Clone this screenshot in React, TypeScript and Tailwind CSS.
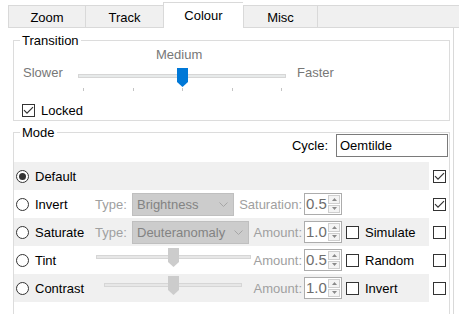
import React from "react";

function CheckBox({ checked }: { checked?: boolean }) {
  return (
    <div className="w-[13px] h-[13px] border border-[#333333] bg-white flex items-center justify-center shrink-0">
      {checked && (
        <svg width="11" height="9" viewBox="0 0 11 9">
          <path d="M1 4.2 L4 7.2 L10 1.2" fill="none" stroke="#333333" strokeWidth="1.2" />
        </svg>
      )}
    </div>
  );
}

function Radio({ checked }: { checked?: boolean }) {
  return (
    <div className="w-[13px] h-[13px] rounded-full border border-[#333333] bg-white flex items-center justify-center shrink-0">
      {checked && <div className="w-[7px] h-[7px] rounded-full bg-[#333333]" />}
    </div>
  );
}

function Thumb({ color }: { color: string }) {
  return (
    <svg width="11" height="19" viewBox="0 0 11 19" className="block">
      <path d="M0 0H11V14L5.5 19L0 14Z" fill={color} />
    </svg>
  );
}

function Combo({ text, w }: { text: string; w: string }) {
  return (
    <div className={`${w} h-[23px] bg-[#cccccc] border border-[#bfbfbf] flex items-center justify-between pl-[4px] pr-[5px] shrink-0`}>
      <span className="text-[#838383] leading-[15px]">{text}</span>
      <svg width="9" height="5" viewBox="0 0 9 5">
        <path d="M0.5 0.5 L4.5 4.5 L8.5 0.5" fill="none" stroke="#a6a6a6" strokeWidth="1" />
      </svg>
    </div>
  );
}

function Spin({ v }: { v: string }) {
  return (
    <div className="w-[38px] h-[22px] border border-[#acacac] bg-white flex shrink-0">
      <div className="flex-1 pl-[1px] text-[#6d6d6d] text-[15px] leading-[20px]">{v}</div>
      <div className="w-[13px] flex flex-col gap-[1px] py-[1px] pr-[1px]">
        <div className="flex-1 border border-[#cfcfcf] bg-[#f4f4f4] flex items-center justify-center">
          <svg width="5" height="3" viewBox="0 0 5 3"><path d="M0 3L2.5 0L5 3Z" fill="#8a8a8a" /></svg>
        </div>
        <div className="flex-1 border border-[#cfcfcf] bg-[#f4f4f4] flex items-center justify-center">
          <svg width="5" height="3" viewBox="0 0 5 3"><path d="M0 0L2.5 3L5 0Z" fill="#8a8a8a" /></svg>
        </div>
      </div>
    </div>
  );
}

function MiniSlider({ w, off, ml }: { w: string; off: string; ml: string }) {
  return (
    <div className={`relative ${w} ${ml} h-[28px] shrink-0`}>
      <div className="absolute left-0 right-0 top-[9px] h-[4px] bg-[#e7e7e7] border border-[#d6d6d6]" />
      <div className={`absolute top-[2px] ${off}`}>
        <Thumb color="#cccccc" />
      </div>
    </div>
  );
}

export default function App() {
  return (
    <div className="w-[459px] h-[314px] bg-white overflow-hidden font-['Liberation_Sans',Arial,sans-serif] text-[13px] text-black">
      {/* Tabs */}
      <div className="flex items-end h-[28px] pl-[8px]">
        <div className="w-[77px] h-[23px] bg-[#f0f0f0] border-l border-t border-b border-[#d9d9d9] pt-[4px] text-center leading-[15px]">Zoom</div>
        <div className="w-[78px] h-[23px] bg-[#f0f0f0] border-l border-t border-b border-[#d9d9d9] pt-[4px] text-center leading-[15px]">Track</div>
        <div className="w-[80px] h-[26px] bg-white border-l border-t border-[#d9d9d9] pt-[5px] text-center leading-[15px]">Colour</div>
        <div className="w-[75px] h-[23px] bg-[#f0f0f0] border-l border-r border-t border-b border-[#d9d9d9] pt-[4px] text-center leading-[15px]">Misc</div>
        <div className="flex-1 h-[23px] bg-[#f0f0f0] border-t border-b border-[#d9d9d9]" />
      </div>

      {/* Panel */}
      <div className="ml-[8px] w-[446px] h-[286px] border-r border-[#d9d9d9] pt-[12px]">
        {/* Transition group */}
        <div className="relative ml-[5px] w-[437px] border border-[#dcdcdc] pt-[6px]">
          <div className="absolute left-[6px] -top-[8px] bg-white px-[2px] leading-[15px]">Transition</div>
          <div className="h-[15px] leading-[15px] text-[#777777] pl-[142px]">Medium</div>
          <div className="flex items-start h-[29px] pl-[9px]">
            <div className="w-[55px] mt-[3px] leading-[15px] text-[#777777]">Slower</div>
            <div className="relative w-[208px] h-[29px]">
              <div className="absolute left-0 right-0 top-[12px] h-[4px] bg-[#e7eaea] border border-[#d6d6d6]" />
              <div className="absolute left-[99px] top-[6px]">
                <Thumb color="#0078d7" />
              </div>
              <div className="absolute top-[26px] left-[5px] w-px h-[3px] bg-[#c4c4c4]" />
              <div className="absolute top-[26px] left-[55px] w-px h-[3px] bg-[#c4c4c4]" />
              <div className="absolute top-[26px] left-[104px] w-px h-[3px] bg-[#c4c4c4]" />
              <div className="absolute top-[26px] left-[154px] w-px h-[3px] bg-[#c4c4c4]" />
              <div className="absolute top-[26px] left-[203px] w-px h-[3px] bg-[#c4c4c4]" />
            </div>
            <div className="ml-[11px] mt-[3px] leading-[15px] text-[#777777]">Faster</div>
          </div>
          <div className="flex items-center h-[19px] mt-[10px] pl-[8px]">
            <CheckBox checked />
            <span className="ml-[6px] leading-[15px]">Locked</span>
          </div>
        </div>

        {/* Mode group */}
        <div className="relative ml-[5px] mt-[11px] w-[437px] h-[220px] border border-[#dcdcdc]">
          <div className="absolute left-[6px] -top-[8px] bg-white px-[2px] leading-[15px]">Mode</div>
          <div className="flex justify-end items-center mt-[1px] h-[23px] pr-[1px]">
            <span className="leading-[15px]">Cycle:</span>
            <div className="ml-[8px] w-[112px] h-[23px] border border-[#7a7a7a] pl-[3px] leading-[21px]">Oemtilde</div>
          </div>

          <div className="mt-[5px] flex flex-col">
            {/* Default */}
            <div className="flex items-center h-[28px]">
              <div className="w-[415px] h-full bg-[#f0f0f0] flex items-center pl-[2px]">
                <Radio checked />
                <span className="ml-[6px] leading-[15px]">Default</span>
              </div>
              <div className="ml-[4px]"><CheckBox checked /></div>
            </div>
            {/* Invert */}
            <div className="flex items-center h-[28px]">
              <div className="w-[415px] h-full flex items-center">
                <div className="w-[81px] h-full flex items-center pl-[2px] shrink-0">
                  <Radio />
                  <span className="ml-[6px] leading-[15px]">Invert</span>
                </div>
                <span className="w-[37px] text-[#a0a0a0] leading-[15px] shrink-0">Type:</span>
                <Combo text="Brightness" w="w-[102px]" />
                <span className="w-[68px] text-right text-[#a0a0a0] leading-[15px] shrink-0">Saturation:</span>
                <div className="ml-[2px]"><Spin v="0.5" /></div>
              </div>
              <div className="ml-[4px]"><CheckBox checked /></div>
            </div>
            {/* Saturate */}
            <div className="flex items-center h-[28px]">
              <div className="w-[415px] h-full bg-[#f0f0f0] flex items-center">
                <div className="w-[81px] h-full flex items-center pl-[2px] shrink-0">
                  <Radio />
                  <span className="ml-[6px] leading-[15px]">Saturate</span>
                </div>
                <span className="w-[37px] text-[#a0a0a0] leading-[15px] shrink-0">Type:</span>
                <Combo text="Deuteranomaly" w="w-[117px]" />
                <span className="w-[53px] text-right text-[#a0a0a0] leading-[15px] shrink-0">Amount:</span>
                <div className="ml-[2px]"><Spin v="1.0" /></div>
                <div className="ml-[4px]"><CheckBox /></div>
                <span className="ml-[6px] leading-[15px]">Simulate</span>
              </div>
              <div className="ml-[4px]"><CheckBox /></div>
            </div>
            {/* Tint */}
            <div className="flex items-center h-[28px]">
              <div className="w-[415px] h-full flex items-center">
                <div className="w-[81px] h-full flex items-center pl-[2px] shrink-0">
                  <Radio />
                  <span className="ml-[6px] leading-[15px]">Tint</span>
                </div>
                <MiniSlider w="w-[155px]" ml="ml-[1px]" off="left-[72px]" />
                <span className="w-[51px] text-right text-[#a0a0a0] leading-[15px] shrink-0">Amount:</span>
                <div className="ml-[2px]"><Spin v="0.5" /></div>
                <div className="ml-[4px]"><CheckBox /></div>
                <span className="ml-[6px] leading-[15px]">Random</span>
              </div>
              <div className="ml-[4px]"><CheckBox /></div>
            </div>
            {/* Contrast */}
            <div className="flex items-center h-[28px]">
              <div className="w-[415px] h-full bg-[#f0f0f0] flex items-center">
                <div className="w-[81px] h-full flex items-center pl-[2px] shrink-0">
                  <Radio />
                  <span className="ml-[6px] leading-[15px]">Contrast</span>
                </div>
                <MiniSlider w="w-[138px]" ml="ml-[9px]" off="left-[64px]" />
                <span className="w-[60px] text-right text-[#a0a0a0] leading-[15px] shrink-0">Amount:</span>
                <div className="ml-[2px]"><Spin v="1.0" /></div>
                <div className="ml-[4px]"><CheckBox /></div>
                <span className="ml-[6px] leading-[15px]">Invert</span>
              </div>
              <div className="ml-[4px]"><CheckBox /></div>
            </div>
          </div>
        </div>
      </div>
    </div>
  );
}
